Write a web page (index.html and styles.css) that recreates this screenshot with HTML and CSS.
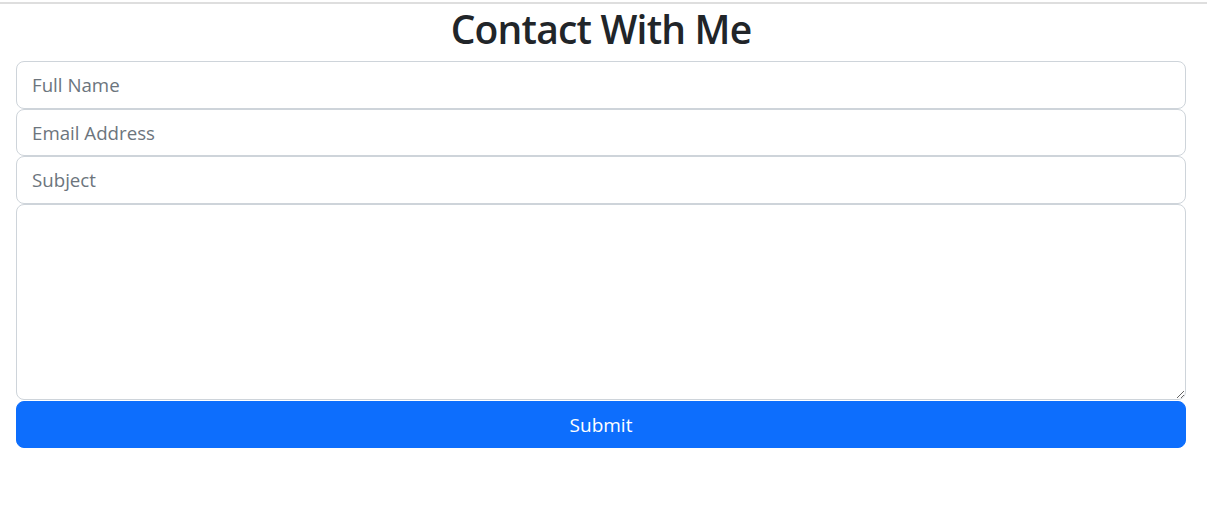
FILE: index.html
```html
<!DOCTYPE html>
<html>
<head>
<meta charset="utf-8">
<link rel="stylesheet" href="styles.css">
</head>
<body>
<div class="topline"></div>
<section class="contact">
  <h2 class="title">Contact With Me</h2>
  <form class="form">
    <input class="field" type="text" placeholder="Full Name">
    <input class="field" type="email" placeholder="Email Address">
    <input class="field" type="text" placeholder="Subject">
    <textarea class="field area"></textarea>
    <button class="submit" type="button">Submit</button>
  </form>
</section>
</body>
</html>
```
FILE: styles.css
```css
* { box-sizing: border-box; }
body {
  margin: 0;
  font-family: "Open Sans", "Noto Sans", sans-serif;
  color: #212529;
  background: #fff;
}
.topline {
  height: 2px;
  margin-top: 2px;
  background: #dedede;
}
.contact {
  padding: 0 21px 0 16px;
}
.title {
  margin: 0;
  height: 57px;
  padding-top: 1px;
  text-align: center;
  font-size: 39px;
  font-weight: 600;
  letter-spacing: -0.8px;
  line-height: 48px;
  color: #212529;
}
.form {
  display: flex;
  flex-direction: column;
}
.field {
  display: block;
  width: 100%;
  height: 47.5px;
  padding: 0 15px;
  font-family: inherit;
  font-size: 18.7px;
  color: #212529;
  background: #fff;
  border: 1px solid #ced4da;
  border-radius: 8px;
  outline: none;
}
.field::placeholder { color: #6c757d; }
.area {
  height: 196.5px;
  resize: vertical;
}
.submit {
  margin-top: 1px;
  height: 47px;
  width: 100%;
  border: 1px solid #0d6efd;
  background: #0d6efd;
  color: #fff;
  font-family: inherit;
  font-size: 19px;
  border-radius: 8px;
}
```
